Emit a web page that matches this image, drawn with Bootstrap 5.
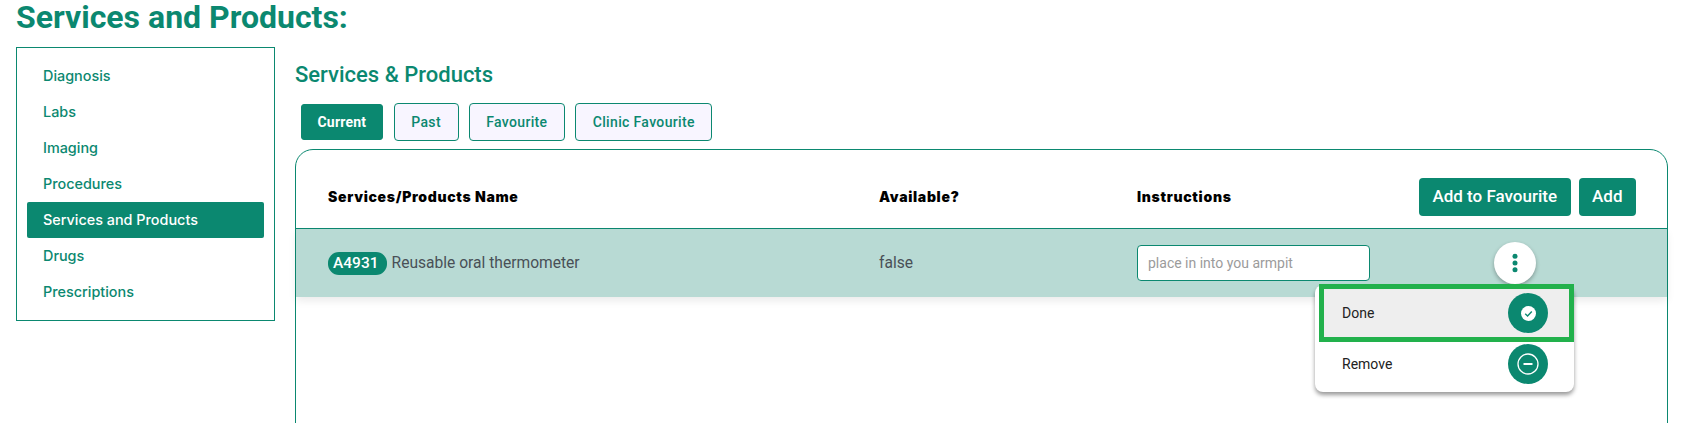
<!DOCTYPE html>
<html lang="en"><head><meta charset="utf-8"><title>Services and Products</title>
<link rel="stylesheet" href="https://cdn.jsdelivr.net/npm/bootstrap@5.3.0/dist/css/bootstrap.min.css">
<style>
:root{--teal:#0b8870;}
html,body{height:423px;overflow:hidden;background:#fff;}
body{font-family:Roboto,sans-serif;padding:0 19px 0 16px;}
.page-title{font:700 32px/34px Roboto,sans-serif;color:var(--teal);margin:0;height:47px;}
.layout{gap:20px;}
.side-box{width:259px;height:274px;border:1px solid var(--teal);padding:10px;flex:none;}
.side-link{display:block;height:36px;padding-left:16px;border-radius:2px;color:var(--teal);font:500 14.4px/36px Inter,sans-serif;text-decoration:none;white-space:nowrap;}
.side-link.on{background:var(--teal);color:#fff;}
.main-area{flex:1;min-width:0;}
.main-head{font:500 22px/26px Roboto,sans-serif;color:var(--teal);margin:14.5px 0 0;height:41.5px;}
.tab-row{gap:10px;padding-left:6px;height:46px;align-items:flex-start;}
.tab-btn{height:37.5px;border:1px solid var(--teal);border-radius:4px;background:#f8f5ff;color:var(--teal);font:500 14px/1 Roboto,sans-serif;letter-spacing:.35px;padding:0 16.6px;}
.tab-btn.on{background:var(--teal);color:#fff;height:36px;margin-top:1px;font-weight:700;letter-spacing:.2px;padding:0 15.5px;margin-right:1px;border-radius:3px;}
.data-card{border:1px solid var(--teal);border-radius:18px 18px 0 0;height:400px;}
.grid-row{display:grid;grid-template-columns:551px 258px 1fr;padding-left:32px;align-items:center;}
.head-row{height:79px;padding-top:15px;border-bottom:1px solid var(--teal);font:900 14px/1 Inter,sans-serif;letter-spacing:.68px;color:#000;}
.item-row{height:68px;background:#b8dad4;box-shadow:0 4px 8px rgba(0,0,0,.08);color:#495057;font-size:15.6px;}
.text-cell{padding-top:2px;}
.act-btn{height:38px;background:var(--teal);color:#fff;border:0;border-radius:4px;font:500 17px/1 Roboto,sans-serif;padding:0 13.5px;}
.code-pill{display:inline-block;background:var(--teal);color:#fff;border-radius:11px;height:23px;line-height:23px;font-size:15.5px;font-weight:500;padding:0 8px 0 5px;margin-right:5px;}
.instr-input{width:233px;height:36px;border:1px solid var(--teal);border-radius:4px;font-size:14px;padding:0 10px;background:#fff;}
.instr-input::placeholder{color:#9b9b9b;}
.last-cell{gap:8px;padding-right:31px;}
.kebab-wrap{position:relative;margin-right:131px;}
.kebab-btn{width:42px;height:42px;border:0;border-radius:50%;background:#fff;box-shadow:0 2px 4px rgba(0,0,0,.3);display:flex;align-items:center;justify-content:center;padding:0;}
.menu-box{position:absolute;top:43px;left:-179px;width:259px;height:107px;background:#fff;border-radius:8px;box-shadow:0 3px 4px rgba(0,0,0,.4);}
.menu-row{display:flex;align-items:center;justify-content:space-between;color:#222;font-size:14px;padding-left:27px;padding-right:26px;}
.menu-row.hit{height:58px;background:#eee;border:5px solid #22b14c;margin:-1px 0 0 4px;padding-left:18px;padding-right:21px;}
.menu-row.plain{height:50px;margin-top:-3px;}
.round-ic{width:40px;height:40px;border-radius:50%;background:var(--teal);display:flex;align-items:center;justify-content:center;flex:none;}
</style></head>
<body>
<h1 class="page-title">Services and Products:</h1>
<div class="d-flex layout">
  <nav class="side-box">
    <a class="side-link" href="#">Diagnosis</a>
    <a class="side-link" href="#">Labs</a>
    <a class="side-link" href="#">Imaging</a>
    <a class="side-link" href="#">Procedures</a>
    <a class="side-link on" href="#">Services and Products</a>
    <a class="side-link" href="#">Drugs</a>
    <a class="side-link" href="#">Prescriptions</a>
  </nav>
  <main class="main-area">
    <h2 class="main-head">Services &amp; Products</h2>
    <div class="d-flex tab-row">
      <button class="tab-btn on">Current</button>
      <button class="tab-btn">Past</button>
      <button class="tab-btn">Favourite</button>
      <button class="tab-btn">Clinic Favourite</button>
    </div>
    <div class="data-card">
      <div class="grid-row head-row">
        <div>Services/Products Name</div>
        <div>Available?</div>
        <div class="d-flex align-items-center justify-content-between last-cell">
          <span>Instructions</span>
          <span class="d-flex gap-2"><button class="act-btn">Add to Favourite</button><button class="act-btn">Add</button></span>
        </div>
      </div>
      <div class="grid-row item-row">
        <div class="text-cell"><span class="code-pill">A4931</span>Reusable oral thermometer</div>
        <div class="text-cell">false</div>
        <div class="d-flex align-items-center justify-content-between">
          <input class="instr-input" placeholder="place in into you armpit">
          <div class="kebab-wrap">
            <button class="kebab-btn" aria-label="More"><svg width="6" height="20" viewBox="0 0 6 20" fill="#0b8870"><circle cx="3" cy="3.2" r="2.5"/><circle cx="3" cy="10" r="2.5"/><circle cx="3" cy="16.8" r="2.5"/></svg></button>
            <div class="menu-box">
              <div class="menu-row hit"><span>Done</span><span class="round-ic"><svg width="15" height="15" viewBox="0 0 16 16"><circle cx="8" cy="8" r="8" fill="#fff"/><path d="M4.5 8.3 7 10.6 11.5 5.8" fill="none" stroke="#0b8870" stroke-width="1.5"/></svg></span></div>
              <div class="menu-row plain"><span>Remove</span><span class="round-ic"><svg width="22" height="22" viewBox="0 0 22 22" fill="none" stroke="#fff"><circle cx="11" cy="11" r="10" stroke-width="1.3"/><path d="M6.5 11h9" stroke-width="2"/></svg></span></div>
            </div>
          </div>
        </div>
      </div>
    </div>
  </main>
</div>
<script src="https://cdn.jsdelivr.net/npm/bootstrap@5.3.0/dist/js/bootstrap.bundle.min.js"></script>
</body></html>
